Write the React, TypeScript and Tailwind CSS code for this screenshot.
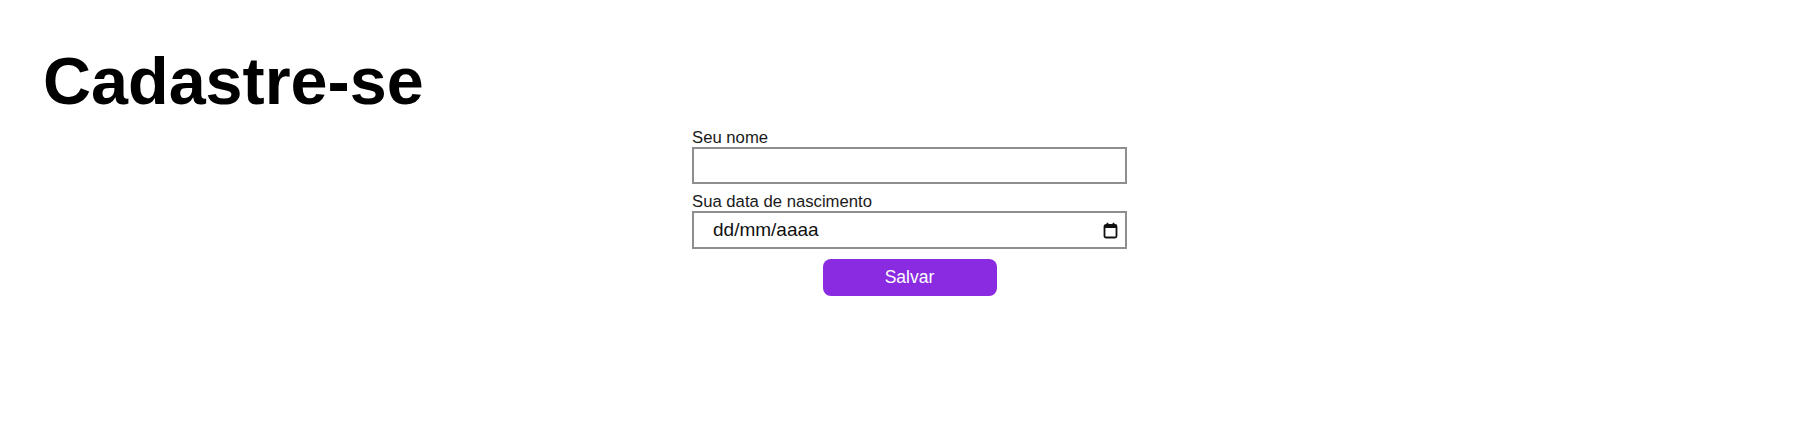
import React from "react";

const CalendarIcon = () => (
  <svg width="15" height="17" viewBox="0 0 15 17" fill="none">
    <rect x="1.5" y="3" width="12" height="12.5" rx="1.5" stroke="#111" strokeWidth="1.8" />
    <rect x="1.5" y="3" width="12" height="3" fill="#111" />
    <rect x="3.6" y="0.8" width="1.8" height="3" fill="#111" />
    <rect x="9.6" y="0.8" width="1.8" height="3" fill="#111" />
  </svg>
);

export default function App() {
  return (
    <div className="min-h-[436px] bg-white text-black font-['Liberation_Sans',Arial,sans-serif]">
      <h1 className="pl-[43px] pt-[48px] text-[66.5px] font-bold leading-[66px]">Cadastre-se</h1>

      <form className="mx-auto mt-[14px] flex w-[435px] translate-x-[3px] flex-col" onSubmit={(e) => e.preventDefault()}>
        <label className="text-[16.7px] leading-[19px] text-[#1a1a1a]">Seu nome</label>
        <input
          type="text"
          className="h-[37px] w-full border-2 border-[#8e8e8e] bg-white px-2 text-[17px] outline-none"
        />

        <label className="mt-[8px] text-[16.7px] leading-[19px] text-[#1a1a1a]">Sua data de nascimento</label>
        <div className="flex h-[38px] w-full items-center justify-between border-2 border-[#8e8e8e] bg-white pl-[19px] pr-[7px]">
          <span className="text-[19px] text-[#111]">dd/mm/aaaa</span>
          <CalendarIcon />
        </div>

        <button
          type="submit"
          className="mx-auto mt-[10px] h-[37px] w-[174px] rounded-[8px] bg-[#8a2be2] text-[17.5px] text-white"
        >
          Salvar
        </button>
      </form>
    </div>
  );
}
